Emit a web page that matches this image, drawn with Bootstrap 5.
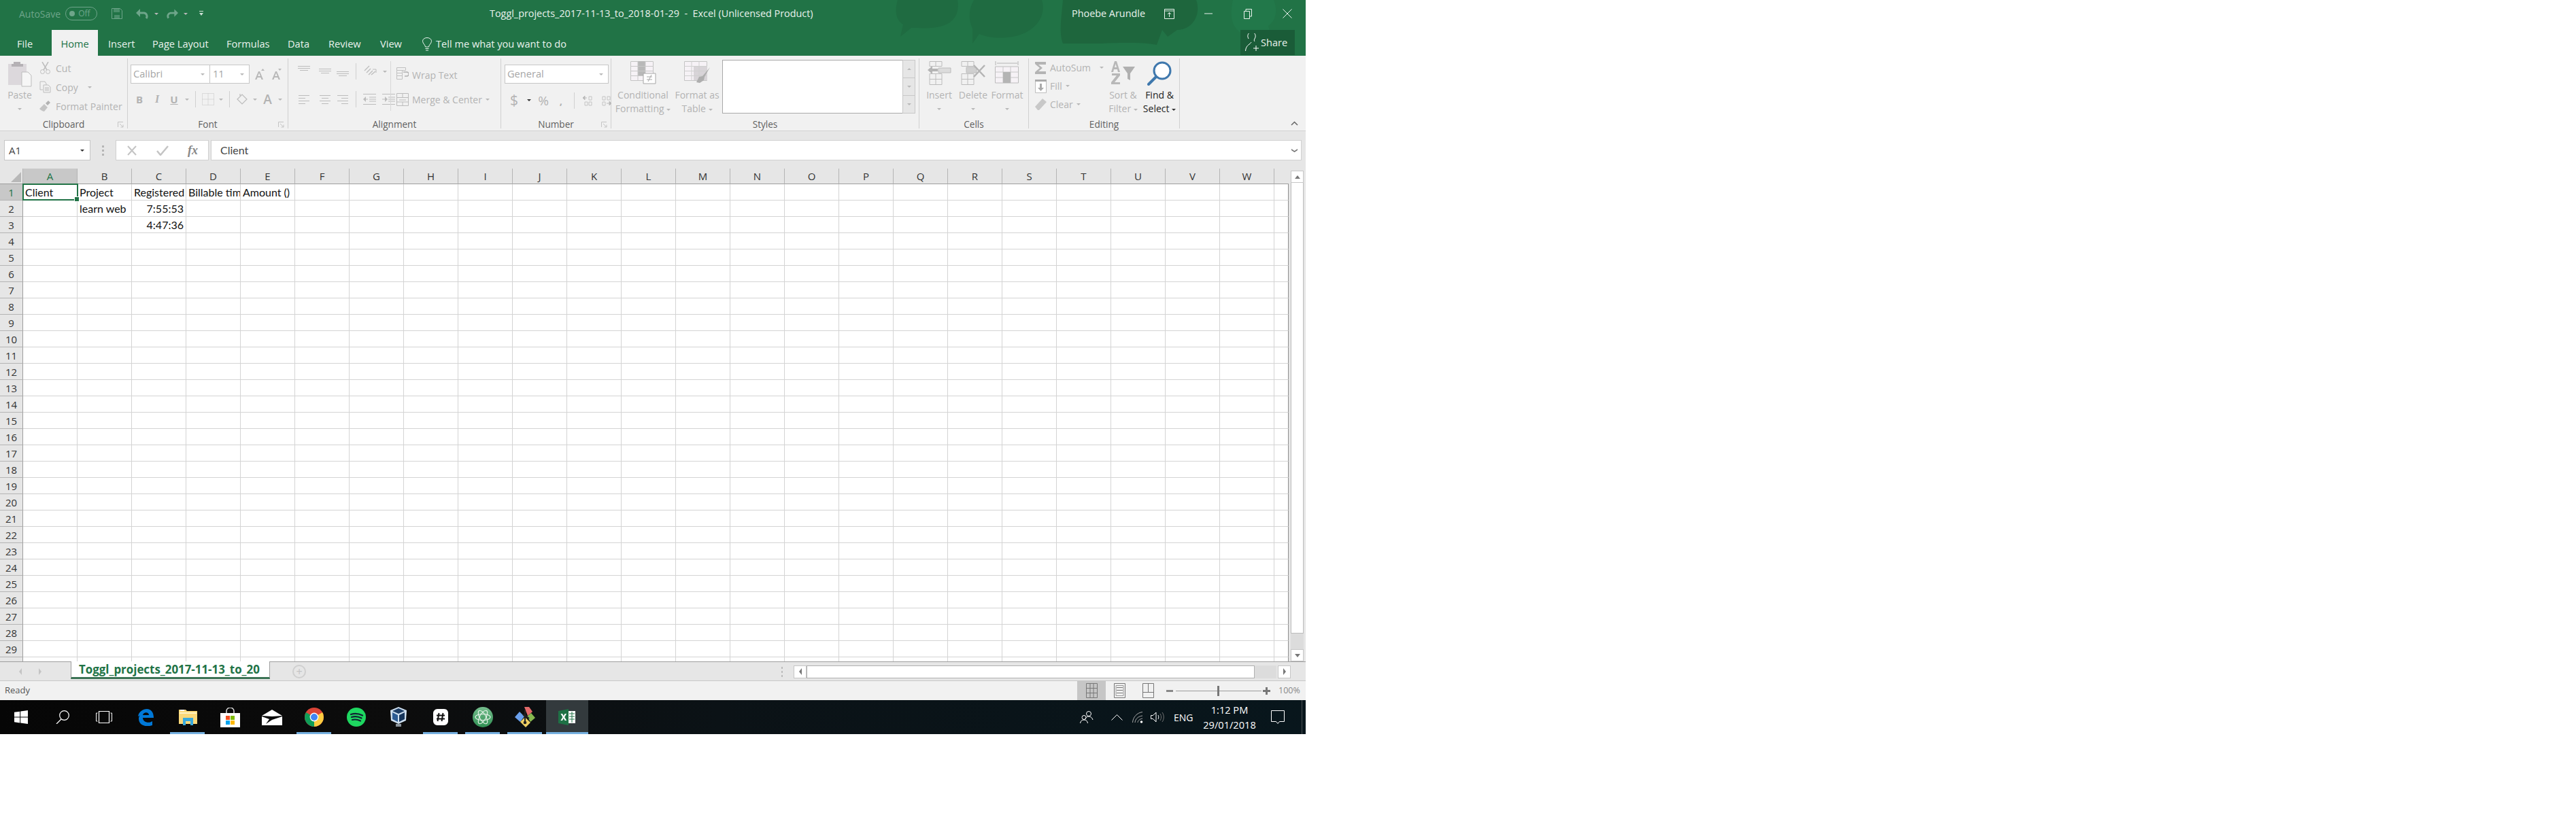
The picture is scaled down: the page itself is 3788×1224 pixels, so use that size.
<!DOCTYPE html>
<html lang="en">
<head>
  <meta charset="UTF-8">
  <meta name="viewport" content="width=device-width, initial-scale=1.0">
  <title>Toggl_projects - Excel</title>
  <link href="https://cdn.jsdelivr.net/npm/bootstrap@5.3.3/dist/css/bootstrap.min.css" rel="stylesheet">
  <style>
    body { background: #fff; font-family: "Open Sans", "Noto Sans", sans-serif; }
    svg { display: block; flex: none; }
    .xl-win { width: 1920px; height: 1080px; overflow: hidden; }

    /* title + tabs */
    .xl-green { position: relative; height: 82px; background: #217346; color: #e9f2ed; font-size: 14px; overflow: hidden; }
    .xl-clouds { position: absolute; left: 0; top: 0; }
    .xl-title { position: relative; height: 44px; padding-bottom: 4px; }
    .xl-tabs { position: relative; height: 38px; }
    .qa { width: 690px; padding-left: 28px; color: #6ea58a; flex: none; }
    .qa-toggle { width: 47px; height: 20px; border: 1px solid #6ea58a; border-radius: 10px; margin-left: 7px; margin-right: 21px; font-size: 12px; gap: 5px; padding-left: 5px; flex: none; }
    .qa-dot { width: 8px; height: 8px; border-radius: 50%; background: #6ea58a; }
    .qa-save { margin-right: 20px; }
    .qa-undo-care { margin: 0 11px 0 8px; }
    .qa-redo-care { margin: 0 17px 0 8px; }
    .doc-title { width: 886px; padding-left: 30px; white-space: pre; font-size: 14.4px; flex: none; }
    .user-name { width: 114px; font-size: 14.4px; flex: none; }
    .win-ctl { width: 58px; flex: none; }
    .tab-item { height: 38px; padding-top: 4px; font-size: 14.6px; white-space: nowrap; flex: none; }
    .tab-file { width: 76px; padding-left: 25px; }
    .tab-home { width: 68px; background: #f1f1f1; color: #217346; justify-content: center; }
    .tab-ins { width: 80px; padding-left: 15px; }
    .tab-pl { width: 109px; }
    .tab-fo { width: 90px; }
    .tab-da { width: 60px; }
    .tab-re { width: 76px; }
    .tab-vi { width: 62px; }
    .tell-me { width: 1203px; gap: 6px; padding-top: 4px; }
    .share-btn { width: 80px; height: 37px; background: #1a5c38; gap: 3px; padding-left: 7px; font-size: 14.6px; flex: none; }

    /* ribbon */
    .xl-ribbon { height: 111px; background: #f1f1f1; border-bottom: 1px solid #d2d2d2; color: #b3b3b3; font-size: 14px; padding: 4px 0 0 0; position: relative; }
    .rb-grp { height: 103px; border-right: 1px solid #d0d0d0; flex: none; }
    .rb-body { height: 88px; display: flow-root; }
    .rb-label { height: 18px; line-height: 18px; text-align: center; color: #5f5f5f; font-size: 13.6px; position: relative; margin-bottom: -3px; }
    .rb-launch { position: absolute; right: 5px; top: 5px; }
    .g-clip { width: 188px; } .g-font { width: 236px; } .g-align { width: 313px; } .g-num { width: 162px; }
    .g-styles { width: 453px; } .g-cells { width: 161px; } .g-edit { width: 222px; }
    .big-btn { align-items: center; padding-top: 4px; }
    .big-ico { height: 40px; }
    .big-txt { height: 20px; line-height: 20px; white-space: nowrap; }
    .care { width: 0; height: 0; border-left: 3px solid transparent; border-right: 3px solid transparent; border-top: 3px solid #b8b8b8; display: inline-block; vertical-align: middle; }
    .care-dk { border-top-color: #333; }
    .vsep { width: 1px; height: 24px; background: #d0d0d0; justify-self: center; align-self: center; }
    .cen { display: flex; justify-content: center; align-items: center; }

    .clip-paste { width: 58px; padding-top: 4px; }
    .clip-row { height: 28px; gap: 6px; white-space: nowrap; }
    .clip-ico { width: 18px; }

    .font-r1 { height: 28px; margin-top: 9px; padding-left: 4px; gap: 0; }
    .combo { height: 28px; background: #fff; border: 1px solid #c6c6c6; padding: 0 7px 0 3px; font-size: 14.6px; color: #a6a6a6; }
    .combo-font { width: 117px; } .combo-size { width: 59px; margin-left: -1px; padding-left: 4px; }
    .combo-num { width: 153px; margin: 9px 0 0 5px; }
    .font-ab { width: 25px; }
    .font-ab-first { margin-left: 2px; }
    .font-r2 { display: grid; grid-template-columns: 26px 26px 24px 13px 12px 26px 12px 12px 26px 12px 25px 12px; height: 28px; margin-top: 9px; padding-left: 4px; }
    .fb { font-weight: 700; font-size: 15px; }
    .fi { font-style: italic; font-family: "Liberation Serif", serif; font-weight: 700; font-size: 16px; }
    .fu { text-decoration: underline; font-weight: 700; font-size: 15px; }
    .fa-big { font-size: 19px; font-weight: 600; }

    .al-left { width: 150px; padding-left: 0; }
    .al-r1 { display: grid; grid-template-columns: 36px 26px 26px 12px 30px 14px; height: 28px; margin-top: 5px; padding-left: 5px; }
    .al-r2 { display: grid; grid-template-columns: 36px 26px 26px 12px 28px 28px; height: 28px; margin-top: 13px; padding-left: 5px; }
    .al-sep { width: 1px; height: 73px; background: #d8d8d8; margin: 4px 8px 0 0; }
    .al-wrap { gap: 5px; white-space: nowrap; height: 28px; }
    .al-wrap-a { margin-top: 10px; }
    .al-wrap-b { margin-top: 8px; }
    .num-r2 { display: grid; grid-template-columns: 28px 16px 26px 26px 12px 28px 26px; height: 28px; margin-top: 9px; padding-left: 5px; }
    .dollar { font-size: 21px; }
    .pct { font-size: 19px; }
    .st-cf { width: 85px; margin-left: 4px; flex: none; }
    .st-ft { width: 74px; flex: none; }
    .gallery { width: 265px; height: 79px; margin-top: 2px; background: #fff; border: 1px solid #a9a9a9; border-right: 0; flex: none; }
    .gal-scroll { width: 19px; height: 79px; margin-top: 2px; background: #e6e6e6; border: 1px solid #c8c8c8; flex: none; }
    .gal-btn { flex: 1; border-bottom: 1px solid #c8c8c8; }
    .gal-btn:last-child { border-bottom: 0; }
    .care-up { width: 0; height: 0; border-left: 3px solid transparent; border-right: 3px solid transparent; border-bottom: 3px solid #bbb; }
    .ce-btn { width: 50px; flex: none; }
    .ce-first { margin-left: 4px; }
    .ed-list { width: 112px; padding-left: 9px; flex: none; }
    .ed-row { height: 27px; gap: 5px; white-space: nowrap; }
    .ed-sort { width: 53px; flex: none; }
    .ed-find { width: 54px; color: #222; flex: none; }
    .rb-collapse { position: absolute; right: 11px; top: 96px; }

    /* formula bar */
    .xl-fbar { height: 55px; background: #e6e6e6; padding: 13px 0 12px 6px; font-size: 15px; }
    .name-box { width: 127px; height: 30px; background: #fff; border: 1px solid #c6c6c6; padding: 0 8px 0 6px; color: #444; font-size: 15px; flex: none; }
    .fbar-dots { width: 37px; gap: 3px; flex: none; }
    .fbar-dot { width: 3px; height: 3px; background: #b5b5b5; }
    .fx-box { width: 137px; height: 30px; background: #fff; border: 1px solid #d0d0d0; margin-right: 3px; padding: 0 15px; flex: none; }
    .fx-txt { font-family: "Liberation Serif", serif; font-style: italic; font-weight: 700; font-size: 18px; color: #888; }
    .fx-input { width: 1604px; height: 30px; background: #fff; border: 1px solid #d0d0d0; padding: 0 5px 0 13px; color: #444; font-family: Lato, sans-serif; font-size: 16px; flex: none; }

    /* sheet */
    .xl-main { height: 725px; }
    .sheet-grid { position: relative; width: 1895px; height: 725px; overflow: hidden; display: grid; grid-template-columns: 34px repeat(23, 80px) 21px; grid-template-rows: 23px repeat(30, 24px); font-family: Lato, sans-serif; font-size: 16px; color: #111; flex: none; }
    .cel { border-right: 1px solid #d4d4d4; border-bottom: 1px solid #d4d4d4; padding: 0 3px; line-height: 23px; white-space: nowrap; overflow: hidden; }
    .cel-r { text-align: right; padding-right: 3px; }
    .cel-end { border-right: 1px solid #8e8e8e; }
    .hd-c { background: #e6e6e6; border-right: 1px solid #b4b4b4; border-bottom: 1px solid #9e9e9e; text-align: center; color: #333; font-family: "Open Sans", sans-serif; font-size: 15px; line-height: 23px; }
    .hd-end { border-right: 0; }
    .hd-r { background: #e6e6e6; border-bottom: 1px solid #b4b4b4; border-right: 1px solid #9e9e9e; text-align: center; color: #333; font-family: "Open Sans", sans-serif; font-size: 15px; line-height: 25px; overflow: hidden; }
    .hd-sel { background: #c8c8c8; color: #217346; }
    .hd-corner { background: #e6e6e6; border-right: 1px solid #b4b4b4; border-bottom: 1px solid #9e9e9e; position: relative; }
    .corner-tri { position: absolute; right: 2px; bottom: 2px; width: 0; height: 0; border-left: 15px solid transparent; border-bottom: 15px solid #b8b8b8; }
    .sel-box { position: absolute; left: 33px; top: 22px; width: 82px; height: 25px; border: 2px solid #217346; pointer-events: none; }
    .sel-handle { position: absolute; right: -4px; bottom: -4px; width: 6px; height: 6px; background: #217346; border: 1px solid #fff; box-sizing: content-box; }
    .vscroll { width: 25px; height: 725px; background: #e6e6e6; padding: 3px 3px 0 3px; flex: none; }
    .vs-btn { height: 18px; background: #fff; border: 1px solid #c6c6c6; flex: none; }
    .vs-thumb { height: 663px; background: #fff; border: 1px solid #bdbdbd; border-top: 0; flex: none; }
    .vs-track { flex: 1; background: #dcdcdc; }
    .tri-u { width: 0; height: 0; border-left: 4px solid transparent; border-right: 4px solid transparent; border-bottom: 5px solid #777; }
    .tri-d { width: 0; height: 0; border-left: 4px solid transparent; border-right: 4px solid transparent; border-top: 5px solid #777; }
    .tri-l { width: 0; height: 0; border-top: 5px solid transparent; border-bottom: 5px solid transparent; border-right: 4px solid #777; }
    .tri-r { width: 0; height: 0; border-top: 5px solid transparent; border-bottom: 5px solid transparent; border-left: 4px solid #777; }
    .tri-lg { border-right-color: #c4c4c4; } .tri-rg { border-left-color: #c4c4c4; }

    /* sheet tabs */
    .xl-sheets { height: 29px; background: #e6e6e6; border-bottom: 1px solid #c8c8c8; }
    .sh-nav { width: 104px; gap: 25px; padding-left: 28px; border-top: 1px solid #9e9e9e; height: 29px; flex: none; }
    .sh-tab { width: 293px; height: 26px; background: #fff; border-bottom: 3px solid #3c7355; border-left: 1px solid #9e9e9e; border-right: 1px solid #9e9e9e; color: #217346; font-weight: 700; font-size: 16.9px; align-self: flex-start; padding-left: 11px; white-space: nowrap; flex: none; overflow: hidden; }
    .sh-rest { height: 29px; border-top: 1px solid #9e9e9e; width: 1523px; padding-left: 33px; flex: none; }
    .sh-add { width: 20px; height: 20px; border: 2px solid #cfcfcf; border-radius: 50%; color: #c4c4c4; flex: none; }
    .sh-dots { margin-left: 683px; width: 34px; gap: 3px; flex: none; }
    .sh-dot { width: 2px; height: 3px; background: #bbb; }
    .hs-btn { width: 19px; height: 19px; background: #fff; border: 1px solid #c6c6c6; flex: none; }
    .hs-thumb { width: 659px; height: 19px; background: #fff; border: 1px solid #b0b0b0; flex: none; }
    .hs-track { width: 32px; height: 19px; background: #dcdcdc; margin-right: 2px; flex: none; }

    /* status */
    .xl-status { height: 28px; background: #f1f1f1; color: #555; font-size: 13px; padding-left: 7px; }
    .st-ready { width: 1577px; flex: none; }
    .st-view { width: 42px; height: 28px; flex: none; }
    .st-view-on { background: #c6c6c6; }
    .st-view-a { width: 41px; }
    .st-view-b { width: 43px; }
    .st-minus { width: 10px; margin-left: 5px; flex: none; }
    .st-plus { width: 11px; margin-left: 2px; flex: none; }
    .st-slider { width: 126px; height: 1px; background: #9c9c9c; margin-left: 4px; position: relative; flex: none; }
    .st-knob { position: absolute; left: 61px; top: -7px; width: 3px; height: 15px; background: #777; }
    .st-pct { margin-left: 12px; color: #888; font-size: 12.5px; flex: none; }

    /* taskbar */
    .xl-task { position: relative; height: 50px; background: linear-gradient(90deg, #060606 0%, #0c0c0c 30%, #0b1216 55%, #08161c 100%); color: #fff; overflow: hidden; }
    .tk-slot { position: relative; width: 62px; height: 50px; flex: none; }
    .tk-sys { width: 61px; }
    .tk-on { background: #333a3d; }
    .tk-bar { position: absolute; left: 5px; right: 6px; bottom: 0; height: 3px; background: #76b0e0; }
    .tk-on .tk-bar { left: 0; right: 0; }
    .tk-fill { width: 723px; flex: none; }
    .tk-tray { font-size: 14px; flex: none; }
    .tk-ppl { width: 46px; flex: none; } .tk-up { width: 31px; flex: none; } .tk-wifi { width: 27px; flex: none; } .tk-vol { width: 34px; flex: none; }
    .tk-eng { width: 30px; flex: none; }
    .tk-clock { width: 104px; text-align: center; line-height: 22px; font-size: 14.6px; flex: none; }
    .tk-note { width: 20px; margin-left: 9px; flex: none; }
    .tk-edge { width: 1px; height: 50px; background: #4a4f52; margin-left: 25px; flex: none; }
  </style>
</head>
<body>
<div class="xl-win d-flex flex-column">

  <div class="xl-green">
    <svg class="xl-clouds" width="1920" height="82" viewBox="0 0 1920 82">
      <g fill="#1f6b41">
        <path d="M1320 0h88c3 16-2 32-22 38-16 5-34 3-46 3l-16 13 4-18c-12-8-12-22-8-36z"/>
        <path d="M1432 0h100c6 20-4 42-34 52-24 6-44 4-58-2l-10 14 0-22c-6-12-6-28 2-42z"/>
        <path d="M1563 0h196c8 22-6 44-28 44l-14 10-8-10-8 22c-20-4-60-3-80-2h-58c-6-16-2-40 0-64z" fill="#1e663d"/>
      </g>
      <path d="M1813 0h60c6 14 4 30-8 38l6 22-18-6c-20 4-34-6-40-20-4-12-2-24 0-34z" fill="#22784a"/>
    </svg>

    <div class="xl-title d-flex align-items-center">
      <div class="qa d-flex align-items-center">
        <span>AutoSave</span>
        <span class="qa-toggle d-flex align-items-center"><span class="qa-dot"></span>Off</span>
        <svg class="qa-save" width="16" height="16" viewBox="0 0 16 16"><path d="M.5.5h12l3 3v12H.5z" fill="none" stroke="#6ea58a"/><path d="M3 1h9v5H3zM4 10h8v5H4z" fill="#6ea58a" opacity=".55"/></svg>
        <svg width="19" height="15" viewBox="0 0 19 15"><path d="M2 6h10a5 5 0 0 1 3 8" fill="none" stroke="#6ea58a" stroke-width="3"/><path d="M0 6l6-6v12z" fill="#6ea58a"/></svg>
        <span class="care qa-undo-care"></span>
        <svg width="18" height="15" viewBox="0 0 19 15"><path d="M17 6H7a5 5 0 0 0-3 8" fill="none" stroke="#6ea58a" stroke-width="3"/><path d="M19 6l-6-6v12z" fill="#6ea58a"/></svg>
        <span class="care qa-redo-care"></span>
        <svg width="6" height="9" viewBox="0 0 6 9"><path d="M0 0h6v1H0zM0 3h6L3 7z" fill="#cfe1d7"/></svg>
      </div>
      <div class="doc-title">Toggl_projects_2017-11-13_to_2018-01-29  -  Excel (Unlicensed Product)</div>
      <div class="user-name">Phoebe Arundle</div>
      <div class="win-ctl cen"><svg width="15" height="15" viewBox="0 0 15 15"><path d="M.5.5h14v14H.5zM1 3h13M7.500 12V6M5 8l2.500-2.500L10 8" fill="none" stroke="#e9f2ed"/></svg></div>
      <div class="win-ctl cen"><svg width="12" height="2" viewBox="0 0 12 2"><path d="M0 1h12" stroke="#e9f2ed"/></svg></div>
      <div class="win-ctl cen"><svg width="12" height="15" viewBox="0 0 12 15"><path d="M.5 3.500h8v11h-8zM3 3V.5h8.500V11H9" fill="none" stroke="#e9f2ed"/></svg></div>
      <div class="win-ctl cen"><svg width="14" height="14" viewBox="0 0 14 14"><path d="M.5.5l13 13M13.500.5l-13 13" stroke="#e9f2ed"/></svg></div>
    </div>

    <div class="xl-tabs d-flex align-items-start">
      <div class="tab-item tab-file d-flex align-items-center">File</div>
      <div class="tab-item tab-home d-flex align-items-center">Home</div>
      <div class="tab-item tab-ins d-flex align-items-center">Insert</div>
      <div class="tab-item tab-pl d-flex align-items-center">Page Layout</div>
      <div class="tab-item tab-fo d-flex align-items-center">Formulas</div>
      <div class="tab-item tab-da d-flex align-items-center">Data</div>
      <div class="tab-item tab-re d-flex align-items-center">Review</div>
      <div class="tab-item tab-vi d-flex align-items-center">View</div>
      <div class="tab-item tell-me d-flex align-items-center">
        <svg width="14" height="20" viewBox="0 0 14 20"><path d="M4.500 14c0-3-4-5-4-8.500a6.500 5 0 0 1 13 0c0 3.500-4 5.500-4 8.500zM4.500 16.500h5M5 19h4" fill="none" stroke="#e9f2ed"/></svg>
        <span>Tell me what you want to do</span>
      </div>
      <div class="share-btn d-flex align-items-center">
        <svg width="20" height="27" viewBox="0 0 20 27"><path d="M5 8a5.500 6.500 0 1 1 9 0c-1 1.500-1 3 0 4M9 13c-1 3-8 4-8.500 13M12 22h8M16 18v8" fill="none" stroke="#fff"/></svg>
        <span>Share</span>
      </div>
    </div>
  </div>

  <div class="xl-ribbon d-flex">
    <div class="rb-grp g-clip">
      <div class="rb-body d-flex">
        <div class="clip-paste d-flex flex-column big-btn">
          <div class="big-ico"><svg width="36" height="38" viewBox="0 0 36 38"><path d="M1 4h27v31H1z" fill="#dcd8dc"/><path d="M9 4V1h10v3h4v4H6V4z" fill="#b5b1b5"/><path d="M21 16h9l5 5v16H21z" fill="#f6f6f6" stroke="#bdbdbd"/></svg></div>
          <div class="big-txt">Paste</div>
          <div class="big-txt cen"><span class="care"></span></div>
        </div>
        <div class="clip-list d-flex flex-column">
          <div class="clip-row d-flex align-items-center"><svg class="clip-ico" width="18" height="18" viewBox="0 0 18 18"><path d="M4 0l7 12M13 0L6 12" stroke="#bdbdbd" stroke-width="1.500"/><circle cx="4.500" cy="14.500" r="3" fill="none" stroke="#bdbdbd"/><circle cx="12.500" cy="14.500" r="3" fill="none" stroke="#bdbdbd"/></svg><span>Cut</span></div>
          <div class="clip-row d-flex align-items-center"><svg class="clip-ico" width="18" height="18" viewBox="0 0 18 18"><path d="M1 1h7l2 3v2M1 1v12h4" fill="none" stroke="#bdbdbd"/><path d="M6 6h7l3 3v8H6zM8 10h6M8 12h6M8 14h6" fill="none" stroke="#bdbdbd"/></svg><span>Copy</span><span class="care ms-2"></span></div>
          <div class="clip-row d-flex align-items-center"><svg class="clip-ico" width="18" height="18" viewBox="0 0 18 18"><path d="M0 13l7-7 5 5-5 6c-3-1-4-1-7-4z" fill="#c4c4c4"/><path d="M9 5l4-4 3 3-4 4z" fill="#b2b2b2"/></svg><span>Format Painter</span></div>
        </div>
      </div>
      <div class="rb-label">Clipboard<svg class="rb-launch" width="9" height="9" viewBox="0 0 9 9"><path d="M.5 8V.5H8M3 3l5 5M8 4.500V8H4.500" fill="none" stroke="#c4c4c4"/></svg></div>
    </div>

    <div class="rb-grp g-font">
      <div class="rb-body">
        <div class="font-r1 d-flex align-items-center">
          <div class="combo combo-font d-flex align-items-center justify-content-between"><span>Calibri</span><span class="care"></span></div>
          <div class="combo combo-size d-flex align-items-center justify-content-between"><span>11</span><span class="care"></span></div>
          <div class="font-ab font-ab-first cen"><svg width="14" height="16" viewBox="0 0 14 16"><path d="M0 16L5 4h2l5 12h-2.500l-1-3H3.500l-1 3zM4.200 11h3.600L6 6.200zM9 3l2.500-3L14 3z" fill="#b8b8b8"/></svg></div>
          <div class="font-ab cen"><svg width="14" height="16" viewBox="0 0 14 16"><path d="M0 16L5 4h2l5 12h-2.500l-1-3H3.500l-1 3zM4.200 11h3.600L6 6.200zM9 0l2.500 3L14 0z" fill="#b8b8b8"/></svg></div>
        </div>
        <div class="font-r2">
          <div class="cen fb">B</div>
          <div class="cen fi">I</div>
          <div class="cen fu">U</div>
          <div class="cen"><span class="care"></span></div>
          <div class="vsep"></div>
          <div class="cen"><svg width="18" height="18" viewBox="0 0 18 18"><path d="M.5.500h17v17H.5zM9 .5v17M.5 9h17" fill="none" stroke="#c4c4c4" stroke-dasharray="1 1"/></svg></div>
          <div class="cen"><span class="care"></span></div>
          <div class="vsep"></div>
          <div class="cen"><svg width="17" height="18" viewBox="0 0 17 18"><path d="M1 9l7-7 7 7-7 7zM5 4V1" fill="none" stroke="#bcbcbc" stroke-width="1.200"/></svg></div>
          <div class="cen"><span class="care"></span></div>
          <div class="cen fa-big">A</div>
          <div class="cen"><span class="care"></span></div>
        </div>
      </div>
      <div class="rb-label">Font<svg class="rb-launch" width="9" height="9" viewBox="0 0 9 9"><path d="M.5 8V.5H8M3 3l5 5M8 4.500V8H4.500" fill="none" stroke="#c4c4c4"/></svg></div>
    </div>

    <div class="rb-grp g-align">
      <div class="rb-body d-flex">
        <div class="al-left">
          <div class="al-r1">
            <div class="cen"><svg width="18" height="18" viewBox="0 0 18 18"><path d="M0 1.500h18M0 4.500h18M3 7.500h12" stroke="#bcbcbc" fill="none"/></svg></div>
            <div class="cen"><svg width="18" height="18" viewBox="0 0 18 18"><path d="M0 5.500h18M0 8.500h18M3 11.500h12" stroke="#bcbcbc" fill="none"/></svg></div>
            <div class="cen"><svg width="18" height="18" viewBox="0 0 18 18"><path d="M0 9.500h18M0 12.500h18M3 15.500h12" stroke="#bcbcbc" fill="none"/></svg></div>
            <div class="vsep"></div>
            <div class="cen"><svg width="20" height="18" viewBox="0 0 20 18"><path d="M2 8L9 1M5 11l6-6M8 14l6-6M12 14l6-5" stroke="#bcbcbc" fill="none" stroke-width="1.300"/><path d="M14 6h5v5" fill="none" stroke="#bcbcbc"/></svg></div>
            <div class="cen"><span class="care"></span></div>
          </div>
          <div class="al-r2">
            <div class="cen"><svg width="16" height="14" viewBox="0 0 16 14"><path d="M0 1.500h16M0 5.500h10M0 9.500h16M0 13.500h10" stroke="#bcbcbc"/></svg></div>
            <div class="cen"><svg width="16" height="14" viewBox="0 0 16 14"><path d="M0 1.500h16M3 5.500h10M0 9.500h16M3 13.500h10" stroke="#bcbcbc"/></svg></div>
            <div class="cen"><svg width="16" height="14" viewBox="0 0 16 14"><path d="M0 1.500h16M6 5.500h10M0 9.500h16M6 13.500h10" stroke="#bcbcbc"/></svg></div>
            <div class="vsep"></div>
            <div class="cen"><svg width="19" height="16" viewBox="0 0 19 16"><path d="M0 .5h19M9 5h10M9 8h10M9 11h10M0 15.500h19M1 8h6" stroke="#bcbcbc"/><path d="M0 8l4-4v8z" fill="#bcbcbc"/></svg></div>
            <div class="cen"><svg width="19" height="16" viewBox="0 0 19 16"><path d="M0 .5h19M9 5h10M9 8h10M9 11h10M0 15.500h19M0 8h6" stroke="#bcbcbc"/><path d="M8 8L4 4v8z" fill="#bcbcbc"/></svg></div>
          </div>
        </div>
        <div class="al-sep"></div>
        <div>
          <div class="al-wrap al-wrap-a d-flex align-items-center"><svg width="18" height="22" viewBox="0 0 18 22"><path d="M.5.500h13v4H.5zM.5 4.500h8v4H.5zM.5 8.500h8v4H.5zM.5 12.500h8v5H.5z" fill="none" stroke="#c0c0c0"/><path d="M10 7h5a2 2 0 0 1 0 6h-3" fill="none" stroke="#b0b0b0" stroke-width="1.300"/></svg><span>Wrap Text</span></div>
          <div class="al-wrap al-wrap-b d-flex align-items-center"><svg width="18" height="19" viewBox="0 0 18 19"><path d="M.5.500h17v18H.5zM.5 6.500h17M.5 13h17M9 .5v6M9 13v5.500M4 10h10" fill="none" stroke="#bcbcbc"/></svg><span>Merge &amp; Center</span><span class="care"></span></div>
        </div>
      </div>
      <div class="rb-label">Alignment</div>
    </div>

    <div class="rb-grp g-num">
      <div class="rb-body">
        <div class="combo combo-num d-flex align-items-center justify-content-between"><span>General</span><span class="care"></span></div>
        <div class="num-r2">
          <div class="cen dollar">$</div>
          <div class="cen"><span class="care care-dk"></span></div>
          <div class="cen pct">%</div>
          <div class="cen fb">,</div>
          <div class="vsep"></div>
          <div class="cen"><svg width="15" height="16" viewBox="0 0 15 16"><path d="M0 4l3-3v6zM3 4h3" stroke="#bbb" fill="#bbb"/><path d="M9 2h4v5H9zM3 10h4v5H3zM9 10h4v5H9z" fill="none" stroke="#c4c4c4"/></svg></div>
          <div class="cen"><svg width="15" height="16" viewBox="0 0 15 16"><path d="M9 2h4v5H9zM2 2h4v5H2zM2 10h4v5H2z" fill="none" stroke="#c4c4c4"/><path d="M15 12l-3-3v6zM8 12h5" stroke="#bbb" fill="#bbb"/></svg></div>
        </div>
      </div>
      <div class="rb-label">Number<svg class="rb-launch" width="9" height="9" viewBox="0 0 9 9"><path d="M.5 8V.5H8M3 3l5 5M8 4.500V8H4.500" fill="none" stroke="#c4c4c4"/></svg></div>
    </div>

    <div class="rb-grp g-styles">
      <div class="rb-body d-flex">
        <div class="big-btn d-flex flex-column st-cf">
          <div class="big-ico"><svg width="38" height="34" viewBox="0 0 38 34"><path d="M.5.500h33v28H.5z" fill="#f6f2f6" stroke="#c4c4c4"/><path d="M11 0h11v22H11z" fill="#b8b8b8"/><path d="M.5 7.500h33M.5 14.500h33M.5 21.500h33M11 .5v28M22 .5v28" stroke="#c8c8c8" fill="none"/><path d="M19 18h18v15H19z" fill="#fff" stroke="#a6a6a6"/><path d="M24 23h8M24 27h8M31 20l-5 10" stroke="#a6a6a6"/></svg></div>
          <div class="big-txt">Conditional</div>
          <div class="big-txt">Formatting <span class="care"></span></div>
        </div>
        <div class="big-btn d-flex flex-column st-ft">
          <div class="big-ico"><svg width="38" height="34" viewBox="0 0 38 34"><path d="M.5.500h33v28H.5z" fill="#f6f2f6" stroke="#c4c4c4"/><path d="M14 7h20v21H14z" fill="#d8d4d8"/><path d="M.5 7.500h33M.5 14.500h33M.5 21.500h33M11 .5v28M22 .5v28" stroke="#d0d0d0" fill="none"/><path d="M18 31l4-8 5-1 11-13-8 14-1 5-6 4z" fill="#aeaeae"/></svg></div>
          <div class="big-txt">Format as</div>
          <div class="big-txt">Table <span class="care"></span></div>
        </div>
        <div class="gallery"></div>
        <div class="gal-scroll d-flex flex-column">
          <div class="gal-btn cen"><span class="care-up"></span></div>
          <div class="gal-btn cen"><span class="care"></span></div>
          <div class="gal-btn cen"><span class="care"></span></div>
        </div>
      </div>
      <div class="rb-label">Styles</div>
    </div>

    <div class="rb-grp g-cells">
      <div class="rb-body d-flex">
        <div class="big-btn d-flex flex-column ce-btn ce-first">
          <div class="big-ico"><svg width="36" height="36" viewBox="0 0 36 36"><path d="M4 .5h18v7H4zM4 18.500h18v16H4zM4 26.500h18M13 18.500v16M13 .5v7" fill="none" stroke="#bcbcbc"/><path d="M1 13l7-6v4h8v4H8v4z" fill="#b4b4b4"/><path d="M17 10h18v7H17z" fill="#dcdcdc" stroke="#bcbcbc"/></svg></div>
          <div class="big-txt">Insert</div>
          <div class="big-txt cen"><span class="care"></span></div>
        </div>
        <div class="big-btn d-flex flex-column ce-btn">
          <div class="big-ico"><svg width="36" height="36" viewBox="0 0 36 36"><path d="M1 .5h18v7H1zM1 18.500h18v16H1zM1 26.500h18M10 18.500v16M10 .5v7" fill="none" stroke="#bcbcbc"/><path d="M8 9h15v8H8z" fill="#d0d0d0" stroke="#bcbcbc"/><path d="M19 23L35 6M19 6l16 17" stroke="#b4b4b4" stroke-width="2.500"/></svg></div>
          <div class="big-txt">Delete</div>
          <div class="big-txt cen"><span class="care"></span></div>
        </div>
        <div class="big-btn d-flex flex-column ce-btn">
          <div class="big-ico"><svg width="36" height="36" viewBox="0 0 36 36"><path d="M1 0v6M34 0v6M3 3h30" fill="none" stroke="#b4b4b4"/><path d="M.5 8h34v24H.5z" fill="#f6f2f6" stroke="#bcbcbc"/><path d="M12 8v24M23 8v24M.5 16h34M.5 24h34" stroke="#c8c8c8" fill="none"/><path d="M12 16h11v16H12z" fill="#b4b4b4"/></svg></div>
          <div class="big-txt">Format</div>
          <div class="big-txt cen"><span class="care"></span></div>
        </div>
      </div>
      <div class="rb-label">Cells</div>
    </div>

    <div class="rb-grp g-edit">
      <div class="rb-body d-flex">
        <div class="ed-list">
          <div class="ed-row d-flex align-items-center"><svg width="17" height="18" viewBox="0 0 17 18"><path d="M0 0h16v4L5 4l6 5-6 5h11v4H0v-3l7-6-7-6z" fill="#b4b4b4"/></svg><span>AutoSum</span><span class="care ms-2"></span></div>
          <div class="ed-row d-flex align-items-center"><svg width="17" height="20" viewBox="0 0 17 20"><path d="M.5.500h16v19H.5z" fill="#fff" stroke="#bdbdbd"/><path d="M0 0h17v3H0zM7 6h3v6h3l-4.500 5L4 12h3z" fill="#aaa"/></svg><span>Fill</span><span class="care"></span></div>
          <div class="ed-row d-flex align-items-center"><svg width="17" height="18" viewBox="0 0 17 18"><path d="M0 12L11 0l6 5-11 12H4z" fill="#c8c8c8"/></svg><span>Clear</span><span class="care"></span></div>
        </div>
        <div class="big-btn d-flex flex-column ed-sort">
          <div class="big-ico"><svg width="36" height="36" viewBox="0 0 36 36"><path d="M0 16L5 0h3l5 16h-3L9 12H4l-1 4zM5 9h3L6.500 4zM1 18h12v3L5 31h8v3H0v-3l8-10H1z" fill="#b8b8b8"/><path d="M17 8h18l-7 10v10l-4-2v-8z" fill="#b0b0b0"/></svg></div>
          <div class="big-txt">Sort &amp;</div>
          <div class="big-txt">Filter <span class="care"></span></div>
        </div>
        <div class="big-btn d-flex flex-column ed-find">
          <div class="big-ico"><svg width="36" height="36" viewBox="0 0 36 36"><circle cx="22" cy="14" r="12" fill="#fff" stroke="#3f78ad" stroke-width="3"/><path d="M13 23L2 34" stroke="#3f78ad" stroke-width="4" stroke-linecap="round"/></svg></div>
          <div class="big-txt">Find &amp;</div>
          <div class="big-txt">Select <span class="care care-dk"></span></div>
        </div>
      </div>
      <div class="rb-label">Editing</div>
    </div>

    <svg class="rb-collapse" width="11" height="7" viewBox="0 0 11 7"><path d="M1 6l4.500-4.500L10 6" fill="none" stroke="#666" stroke-width="1.500"/></svg>
  </div>

  <div class="xl-fbar d-flex">
    <div class="name-box d-flex align-items-center justify-content-between"><span>A1</span><span class="care care-dk"></span></div>
    <div class="fbar-dots d-flex flex-column align-items-center justify-content-center"><span class="fbar-dot"></span><span class="fbar-dot"></span><span class="fbar-dot"></span></div>
    <div class="fx-box d-flex align-items-center justify-content-between">
      <svg width="16" height="15" viewBox="0 0 16 15"><path d="M2 1l12 13M14 1L2 14" stroke="#c4c4c4" stroke-width="2"/></svg>
      <svg width="18" height="15" viewBox="0 0 18 15"><path d="M1 8l5 6L17 1" fill="none" stroke="#c4c4c4" stroke-width="2.500"/></svg>
      <span class="fx-txt">fx</span>
    </div>
    <div class="fx-input d-flex align-items-center justify-content-between"><span>Client</span><svg width="9" height="5" viewBox="0 0 9 5"><path d="M0 0l4.500 3L9 0v2L4.500 5 0 2z" fill="#777"/></svg></div>
  </div>

  <div class="xl-main d-flex">
    <div class="sheet-grid" id="sheet"></div>
    <div class="vscroll d-flex flex-column">
      <div class="vs-btn cen"><span class="tri-u"></span></div>
      <div class="vs-thumb"></div>
      <div class="vs-track"></div>
      <div class="vs-btn cen"><span class="tri-d"></span></div>
    </div>
  </div>

  <div class="xl-sheets d-flex">
    <div class="sh-nav d-flex align-items-center"><span class="tri-l tri-lg"></span><span class="tri-r tri-rg"></span></div>
    <div class="sh-tab d-flex align-items-center">Toggl_projects_2017-11-13_to_20</div>
    <div class="sh-rest d-flex align-items-center">
      <div class="sh-add cen">+</div>
      <div class="sh-dots d-flex flex-column align-items-center"><span class="sh-dot"></span><span class="sh-dot"></span><span class="sh-dot"></span></div>
      <div class="hs-btn cen"><span class="tri-l"></span></div>
      <div class="hs-thumb"></div>
      <div class="hs-track"></div>
      <div class="hs-btn cen"><span class="tri-r"></span></div>
    </div>
  </div>

  <div class="xl-status d-flex align-items-center">
    <div class="st-ready">Ready</div>
    <div class="st-view st-view-on cen"><svg width="17" height="22" viewBox="0 0 17 22"><path d="M.5.500h16v21H.5zM.5 7.500h16M.5 14.500h16M6 .5v21M11 .5v21" fill="none" stroke="#777"/></svg></div>
    <div class="st-view st-view-a cen"><svg width="17" height="22" viewBox="0 0 17 22"><path d="M.5.500h16v21H.5zM4 6.500h9M4 10.500h9M4 14.500h9" fill="none" stroke="#777"/><path d="M3 3.500h11v15H3z" fill="none" stroke="#999"/></svg></div>
    <div class="st-view st-view-b cen"><svg width="17" height="22" viewBox="0 0 17 22"><path d="M.5.500h16v21H.5zM8.500.5v13M.5 13.500h16" fill="none" stroke="#777"/></svg></div>
    <div class="st-minus cen"><svg width="10" height="3" viewBox="0 0 10 3"><path d="M0 0h10v3H0z" fill="#888"/></svg></div>
    <div class="st-slider"><span class="st-knob"></span></div>
    <div class="st-plus cen"><svg width="11" height="11" viewBox="0 0 11 11"><path d="M4 0h3v4h4v3H7v4H4V7H0V4h4z" fill="#777"/></svg></div>
    <div class="st-pct">100%</div>
  </div>

  <div class="xl-task d-flex">
    <div class="tk-slot tk-sys cen"><svg width="20" height="20" viewBox="0 0 20 20"><path d="M0 2.800l8.200-1.100v7.900H0zM9.200 1.500L20 0v9.600H9.200zM0 10.500h8.200v7.900L0 17.200zM9.200 10.500H20V20L9.200 18.500z" fill="#fff"/></svg></div>
    <div class="tk-slot tk-sys cen"><svg width="20" height="20" viewBox="0 0 20 20"><circle cx="12.500" cy="7.500" r="6.800" fill="none" stroke="#fff" stroke-width="1.200"/><path d="M8 13L1 20" stroke="#fff" stroke-width="1.300"/></svg></div>
    <div class="tk-slot tk-sys cen"><svg width="24" height="18" viewBox="0 0 24 18"><path d="M4.500.5h15v17h-15z" fill="none" stroke="#fff" stroke-width="1.200"/><path d="M2.500 3H.5v12h2M21.500 3h2v12h-2" fill="none" stroke="#fff"/></svg></div>
    <div class="tk-slot cen"><svg width="24" height="25" viewBox="0 0 24 25"><path d="M1 11C2 4 8 0 14 0c6 0 10 5 10 13H8c0 6 8 9 14 5v6c-8 3-20 1-20-10 0-2 1-5 4-7-2 2-3 3-5 4zM8 9h9c0-5-8-5-9 0z" fill="#0078d7"/></svg></div>
    <div class="tk-slot cen"><svg width="27" height="24" viewBox="0 0 27 24"><path d="M0 1h10l2 2h15v19H0z" fill="#fbd879"/><path d="M1 5h25v2H1z" fill="#fff2c4"/><path d="M2 1h6v2H2z" fill="#fff"/><path d="M6 24v-11h15v11h-4v-6h-7v6z" fill="#39a9dc"/></svg><span class="tk-bar"></span></div>
    <div class="tk-slot cen"><svg width="29" height="29" viewBox="0 0 29 29"><path d="M9 9V5a5.500 5 0 0 1 11 0v4" fill="none" stroke="#ddd" stroke-width="1.500"/><path d="M0 8h29v21H0z" fill="#fff"/><path d="M8 12h6v6H8z" fill="#f25022"/><path d="M15 12h6v6h-6z" fill="#7fba00"/><path d="M8 19h6v6H8z" fill="#00a4ef"/><path d="M15 19h6v6h-6z" fill="#ffb900"/></svg></div>
    <div class="tk-slot cen"><svg width="30" height="23" viewBox="0 0 30 23"><path d="M0 9L15 0l15 9-15 1z" fill="#fff"/><path d="M0 10l11 4-5 7 9-6 15-5v13H0z" fill="#fff"/></svg></div>
    <div class="tk-slot cen"><svg width="28" height="28" viewBox="0 0 28 28"><circle cx="14" cy="14" r="14" fill="#db4437"/><path d="M14 14L26.100 7A14 14 0 0 1 14 28z" fill="#ffcd40"/><path d="M14 14L14 28A14 14 0 0 1 1.900 7z" fill="#0f9d58"/><circle cx="14" cy="14" r="6.400" fill="#fff"/><circle cx="14" cy="14" r="5" fill="#4285f4"/></svg><span class="tk-bar"></span></div>
    <div class="tk-slot cen"><svg width="28" height="28" viewBox="0 0 28 28"><circle cx="14" cy="14" r="14" fill="#1ed760"/><path d="M6 10c6-2 12-1 17 1.500M7 14c5-1.500 10-1 14.500 1.500M8 18c4-1 8-.5 12 1.500" fill="none" stroke="#123" stroke-width="2.200" stroke-linecap="round"/></svg></div>
    <div class="tk-slot cen"><svg width="24" height="30" viewBox="0 0 24 30"><path d="M12 0l12 5-1 15-11 5L1 20 0 5z" fill="#cfe0f0"/><path d="M12 2l9 4-9 4-9-4z" fill="#1d3e66"/><path d="M3 8l8 4v10l-8-4z" fill="#2c5c94"/><path d="M13 12l8-4v10l-8 4z" fill="#17365c"/><path d="M8 25h8v4H8z" fill="#8b949c"/></svg></div>
    <div class="tk-slot cen"><svg width="22" height="24" viewBox="0 0 22 24"><path d="M6 0h10c4 0 6 3 6 6v12c0 3-3 6-6 6H6c-3 0-6-3-6-6V6c0-3 3-6 6-6z" fill="#fff"/><path d="M8.500 6l-2 12M14.500 6l-2 12M5 9.500h12M5 14.500h12" stroke="#111" stroke-width="2"/></svg><span class="tk-bar"></span></div>
    <div class="tk-slot cen"><svg width="30" height="30" viewBox="0 0 30 30"><defs><linearGradient id="atomg" x1="0" y1="0" x2="0" y2="1"><stop offset="0" stop-color="#75bd8d"/><stop offset="1" stop-color="#2f8f52"/></linearGradient></defs><circle cx="15" cy="15" r="15" fill="url(#atomg)"/><g fill="none" stroke="#e8f4ea" stroke-width="1.100"><ellipse cx="15" cy="15" rx="11" ry="4.500"/><ellipse cx="15" cy="15" rx="11" ry="4.500" transform="rotate(60 15 15)"/><ellipse cx="15" cy="15" rx="11" ry="4.500" transform="rotate(120 15 15)"/></g></svg><span class="tk-bar"></span></div>
    <div class="tk-slot cen"><svg width="30" height="30" viewBox="0 0 30 30"><path d="M14 0h7l5 7-7 6z" fill="#e36a6a"/><path d="M0 15l7-8 7 7-6 8z" fill="#6aa0ec"/><path d="M18 14l6-5 6 7-7 6z" fill="#87b84f"/><path d="M8 22l7-7 8 8-7 7z" fill="#efcf63"/><path d="M15 4v20M15 12l6 5M15 14l-3-3" stroke="#222" stroke-width="2"/><circle cx="15" cy="23" r="2.300" fill="#222"/></svg><span class="tk-bar"></span></div>
    <div class="tk-slot tk-on cen"><svg width="26" height="24" viewBox="0 0 26 24"><path d="M15 0v24L0 21V3z" fill="#1e7145"/><path d="M15 3h10v18H15z" fill="#fff"/><path d="M16 7h8M16 11h8M16 15h8M20 4v16" stroke="#1e7145"/><path d="M3.500 7h2.600l1.700 3.300L9.600 7h2.500L9.200 12l3 5H9.600l-1.800-3.400L6 17H3.400l3-5z" fill="#fff"/></svg><span class="tk-bar"></span></div>
    <div class="tk-fill"></div>
    <div class="tk-tray d-flex align-items-center">
      <div class="tk-ppl"><svg width="20" height="19" viewBox="0 0 20 19"><circle cx="13" cy="4" r="3.500" fill="none" stroke="#fff"/><path d="M8 12c1-3 2-4 5-4s5 2 6 5" fill="none" stroke="#fff"/><circle cx="6" cy="9.500" r="3" fill="none" stroke="#fff"/><path d="M.5 18c.5-3 2-5 5.500-5s5 2 5.500 5" fill="none" stroke="#fff"/></svg></div>
      <div class="tk-up"><svg width="17" height="9" viewBox="0 0 17 9"><path d="M.5 8.500l8-8 8 8" fill="none" stroke="#fff"/></svg></div>
      <div class="tk-wifi"><svg width="16" height="17" viewBox="0 0 16 17"><path d="M.5 16C1 8 7 1.500 15 .5M4 16c.5-5 4-9 11-10M8 16c0-2 2-5 7-6" fill="none" stroke="#aaa"/><circle cx="13.500" cy="15" r="1.800" fill="#fff"/></svg></div>
      <div class="tk-vol"><svg width="20" height="16" viewBox="0 0 20 16"><path d="M.5 5.500h3L8 1v14l-4.500-4.500h-3z" fill="none" stroke="#fff"/><path d="M11 5c1 2 1 4 0 6" fill="none" stroke="#fff"/><path d="M14 3c2 3 2 7 0 10M17 1c3 4 3 10 0 14" fill="none" stroke="#777"/></svg></div>
      <div class="tk-eng">ENG</div>
      <div class="tk-clock"><div>1:12 PM</div><div>29/01/2018</div></div>
      <div class="tk-note"><svg width="20" height="21" viewBox="0 0 20 21"><path d="M.5.500h19v16h-7l-2.500 3-2.500-3h-7z" fill="none" stroke="#fff"/></svg></div>
      <div class="tk-edge"></div>
    </div>
  </div>
</div>

<script>
  // build the worksheet cells
  const sheet = document.getElementById('sheet');
  const colNames = 'ABCDEFGHIJKLMNOPQRSTUVW'.split('');
  const data = {
    'A1': 'Client', 'B1': 'Project', 'C1': 'Registered', 'D1': 'Billable tim', 'E1': 'Amount ()',
    'B2': 'learn web', 'C2': '7:55:53', 'C3': '4:47:36'
  };
  const rightAligned = ['C2', 'C3'];
  let html = '<div class="hd-corner"><span class="corner-tri"></span></div>';
  colNames.forEach(c => {
    html += `<div class="hd-c${c === 'A' ? ' hd-sel' : ''}">${c}</div>`;
  });
  html += '<div class="hd-c hd-end"></div>';
  for (let r = 1; r <= 30; r++) {
    html += `<div class="hd-r${r === 1 ? ' hd-sel' : ''}">${r < 30 ? r : ''}</div>`;
    colNames.forEach(c => {
      const key = c + r;
      html += `<div class="cel${rightAligned.includes(key) ? ' cel-r' : ''}">${data[key] || ''}</div>`;
    });
    html += '<div class="cel cel-end"></div>';
  }
  html += '<div class="sel-box"><span class="sel-handle"></span></div>';
  sheet.innerHTML = html;
</script>
<script src="https://cdn.jsdelivr.net/npm/bootstrap@5.3.3/dist/js/bootstrap.bundle.min.js"></script>
</body>
</html>
